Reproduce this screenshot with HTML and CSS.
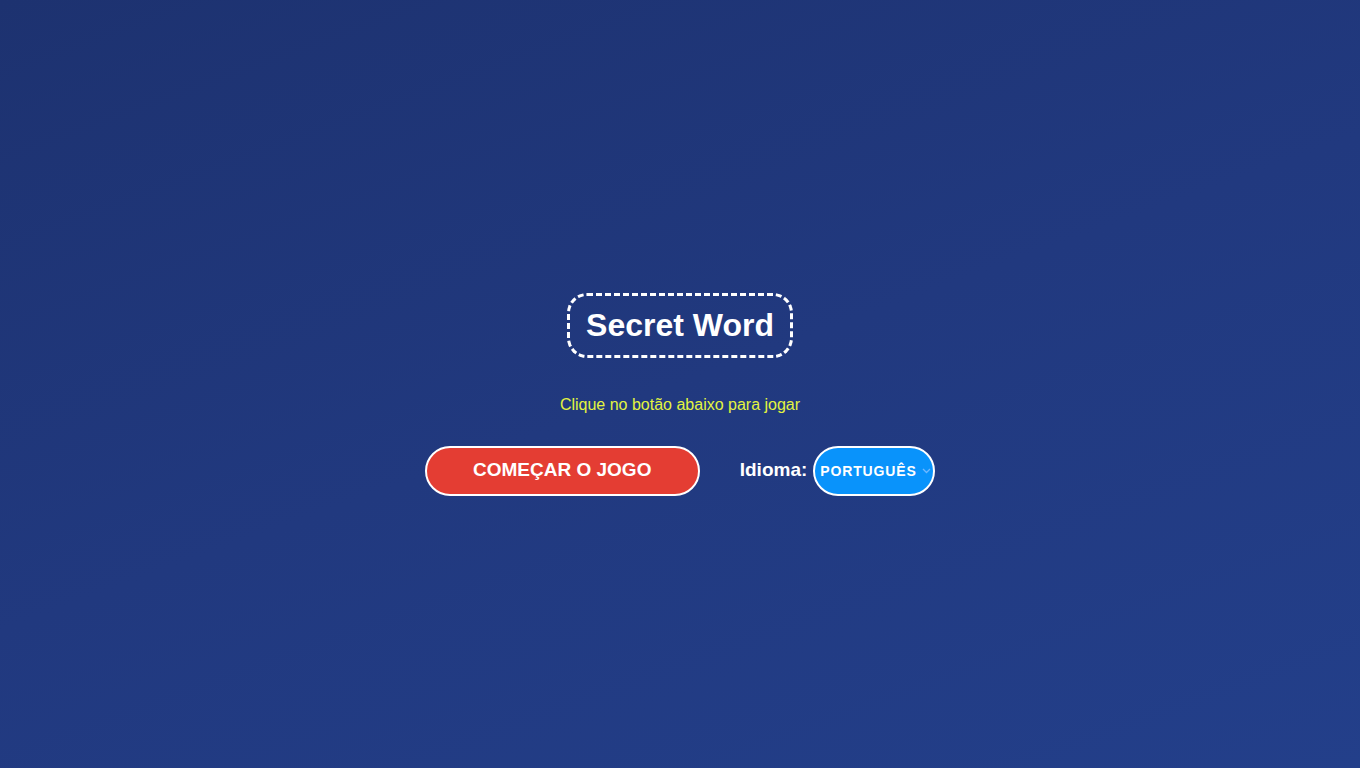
FILE: index.html
```html
<!DOCTYPE html>
<html lang="pt">
<head>
<meta charset="utf-8">
<title>Secret Word</title>
<link rel="stylesheet" href="styles.css">
</head>
<body>
<main class="screen">
  <h1 class="title">Secret Word</h1>
  <p class="hint">Clique no botão abaixo para jogar</p>
  <div class="controls">
    <button class="start">COMEÇAR O JOGO</button>
    <label class="lang">
      <span class="lang-label">Idioma:</span>
      <span class="select">
        <span class="select-text">PORTUGUÊS</span>
        <svg class="chev" width="9" height="6" viewBox="0 0 9 6"><path d="M1 1 L4.5 4.5 L8 1" fill="none" stroke="#6fb8ff" stroke-width="1.3"/></svg>
      </span>
    </label>
  </div>
</main>
</body>
</html>
```

FILE: styles.css
```css
html, body {
  margin: 0;
  padding: 0;
}
body {
  width: 1360px;
  height: 768px;
  background: linear-gradient(160deg, #1d3270 0%, #21397f 50%, #233f8a 100%);
  font-family: "Liberation Sans", Arial, sans-serif;
  color: #fff;
  overflow: hidden;
}
.screen {
  display: flex;
  flex-direction: column;
  align-items: center;
  padding-top: 293px;
}
.title {
  margin: 0;
  font-size: 32px;
  font-weight: bold;
  line-height: 37px;
  padding: 11px 16px 11px 16px;
  border: 3px dashed #fff;
  border-radius: 20px;
}
.hint {
  margin: 38px 0 0 0;
  font-size: 16px;
  line-height: 18px;
  color: #e3f43f;
}
.controls {
  margin-top: 32px;
  display: flex;
  align-items: center;
  gap: 40px;
}
.start {
  width: 275px;
  height: 50px;
  border: 2px solid #fff;
  border-radius: 25px;
  background: #e43d33;
  color: #fff;
  font-family: "Liberation Sans", Arial, sans-serif;
  font-size: 19px;
  font-weight: bold;
  padding: 0 0 2px 0;
  margin: 0;
}
.lang {
  display: flex;
  align-items: center;
  gap: 6px;
}
.lang-label {
  font-size: 19px;
  font-weight: bold;
  padding-bottom: 2px;
}
.select {
  display: flex;
  align-items: center;
  box-sizing: border-box;
  width: 122px;
  height: 50px;
  border: 2px solid #fff;
  border-radius: 25px;
  background: #0993fb;
  padding-left: 5px;
  gap: 5px;
}
.select-text {
  font-size: 14px;
  font-weight: bold;
  letter-spacing: 0.85px;
}
.chev {
  display: block;
}
```
